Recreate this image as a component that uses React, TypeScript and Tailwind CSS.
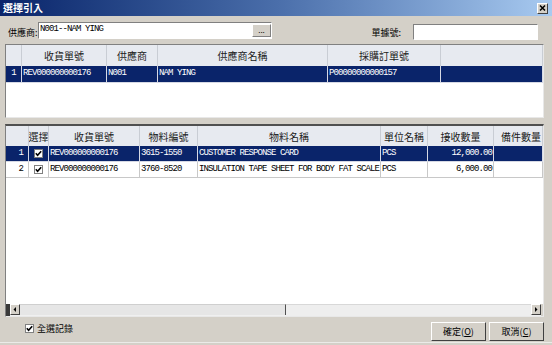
import type { ReactNode } from "react";

const CJK = "font-['Noto_Sans_CJK_TC','Noto_Sans_CJK_SC',sans-serif]";
const MONO = "font-['Liberation_Mono','Noto_Sans_CJK_TC',monospace] text-[9px] tracking-[-0.9px]";

type Col = { title: string; align?: "left" | "right" | "center" };

const UPPER_COLS = "grid-cols-[16px_85px_51px_170px_113px_1fr]";
const LOWER_COLS = "grid-cols-[23px_20px_91px_58px_183px_47px_66px_1fr]";

const upperHead: Col[] = [
  { title: "" },
  { title: "收貨單號" },
  { title: "供應商" },
  { title: "供應商名稱" },
  { title: "採購訂單號" },
  { title: "" },
];

const lowerHead: Col[] = [
  { title: "" },
  { title: "選擇" },
  { title: "收貨單號" },
  { title: "物料編號" },
  { title: "物料名稱" },
  { title: "單位名稱" },
  { title: "接收數量" },
  { title: "備件數量", align: "right" },
];

const items = [
  { no: 1, rev: "REV000000000176", code: "3615-1550", name: "CUSTOMER RESPONSE CARD", unit: "PCS", qty: "12,000.00", selected: true },
  { no: 2, rev: "REV000000000176", code: "3760-8520", name: "INSULATION TAPE SHEET FOR BODY FAT SCALE", unit: "PCS", qty: "6,000.00", selected: false },
];

function Check() {
  return (
    <span className="w-[9px] h-[9px] bg-white border border-[#808080] flex items-center justify-center">
      <svg width="7" height="7" viewBox="0 0 7 7">
        <path d="M0.8 3.2 L2.6 5.2 L6.2 1.2" stroke="#000" strokeWidth="1.6" fill="none" />
      </svg>
    </span>
  );
}

function HeadRow({ cols, gridCls, h }: { cols: Col[]; gridCls: string; h: string }) {
  return (
    <div className={`grid ${gridCls} ${h} bg-[#e7eaf0] shrink-0`}>
      {cols.map((c, i) => (
        <div
          key={i}
          className={`flex items-center border-r border-[#c9cdd4] text-[10px] text-[#1a1a1a] whitespace-nowrap overflow-hidden ${
            c.align === "right" ? "justify-end pr-[1px]" : "justify-center"
          }`}
        >
          {c.title}
        </div>
      ))}
    </div>
  );
}

function Cell({ children, right, sel, center }: { children?: ReactNode; right?: boolean; sel: boolean; center?: boolean }) {
  return (
    <div
      className={`flex items-center overflow-hidden whitespace-nowrap border-r border-b ${
        sel ? "border-[#d6d9e4] text-white" : "border-[#c8c8c8] text-black"
      } ${right ? "justify-end pr-[1px]" : center ? "justify-center" : "pl-[1px]"}`}
    >
      {children}
    </div>
  );
}

function ArrowBtn({ dir }: { dir: "left" | "right" }) {
  return (
    <div className="w-[10px] h-[11px] bg-[#d4d0c8] border border-t-white border-l-white border-r-[#404040] border-b-[#404040] flex items-center justify-center shrink-0">
      <svg width="4" height="5" viewBox="0 0 4 5">
        {dir === "left" ? <path d="M3 0 L0.5 2.5 L3 5 Z" fill="#000" /> : <path d="M1 0 L3.5 2.5 L1 5 Z" fill="#000" />}
      </svg>
    </div>
  );
}

export default function App() {
  return (
    <div className={`w-[552px] h-[345px] bg-[#d4d0c8] flex flex-col overflow-hidden ${CJK}`}>
      {/* title bar */}
      <div className="h-[16px] shrink-0 flex items-center justify-between bg-gradient-to-r from-[#0a246a] via-[#4a6eaa] to-[#a8caf0]">
        <span className="pl-[3px] text-white text-[10px] font-bold leading-none">選擇引入</span>
        <div className="mr-[4px] w-[11px] h-[11px] bg-[#d4d0c8] border border-t-white border-l-white border-r-[#404040] border-b-[#404040] flex items-center justify-center">
          <svg width="7" height="6" viewBox="0 0 7 6">
            <path d="M1 0.5 L6 5.5 M6 0.5 L1 5.5" stroke="#000" strokeWidth="1.5" />
          </svg>
        </div>
      </div>

      {/* search row */}
      <div className="h-[17px] mt-[6px] flex items-center shrink-0">
        <span className="pl-[8px] w-[38px] text-[9px] leading-none pt-[4px] whitespace-nowrap">供應商:</span>
        <div className="w-[234px] h-[17px] bg-white border border-t-[#808080] border-l-[#808080] border-r-white border-b-white flex items-start justify-between">
          <span className={`${MONO} leading-none pt-[2px] pl-[1px]`}>N001--NAM YING</span>
          <div className="w-[19px] h-[13px] mt-[1px] bg-[#d4d0c8] border border-t-white border-l-white border-r-[#808080] border-b-[#808080] flex items-end justify-center text-[8px] leading-none pb-[2px]">
            ...
          </div>
        </div>
        <span className="ml-auto text-[9px] leading-none pt-[3px] whitespace-nowrap">單據號:</span>
        <div className="ml-[12px] mr-[14px] w-[125px] h-[16px] mt-[2px] bg-white border border-t-[#808080] border-l-[#808080] border-r-white border-b-white" />
      </div>

      {/* upper grid */}
      <div className="mt-[5px] ml-[5px] w-[539px] h-[74px] shrink-0 bg-white border border-t-[#808080] border-l-[#808080] border-r-[#e8e8e8] border-b-[#e8e8e8] flex flex-col overflow-hidden">
        <HeadRow cols={upperHead} gridCls={UPPER_COLS} h="h-[21px]" />
        <div className={`grid ${UPPER_COLS} h-[17px] bg-[#0a246a] ${MONO}`}>
          <Cell sel center>
            1
          </Cell>
          <Cell sel>REV000000000176</Cell>
          <Cell sel>N001</Cell>
          <Cell sel>NAM YING</Cell>
          <Cell sel>P00000000000157</Cell>
          <Cell sel />
        </div>
      </div>

      {/* lower grid */}
      <div className="mt-[6px] ml-[5px] w-[539px] h-[193px] shrink-0 bg-white border-t-2 border-l border-t-[#505050] border-l-[#808080] border-r border-b border-r-[#e8e8e8] border-b-[#e8e8e8] flex flex-col overflow-hidden">
        <HeadRow cols={lowerHead} gridCls={LOWER_COLS} h="h-[20px]" />
        {items.map((r) => (
          <div key={r.no} className={`grid ${LOWER_COLS} h-[16px] ${r.selected ? "bg-[#0a246a]" : "bg-white"} ${MONO}`}>
            <Cell sel={r.selected} right>
              <span className="pr-[4px]">{r.no}</span>
            </Cell>
            <Cell sel={r.selected} center>
              <Check />
            </Cell>
            <Cell sel={r.selected}>{r.rev}</Cell>
            <Cell sel={r.selected}>{r.code}</Cell>
            <Cell sel={r.selected}>{r.name}</Cell>
            <Cell sel={r.selected}>{r.unit}</Cell>
            <Cell sel={r.selected} right>
              {r.qty}
            </Cell>
            <Cell sel={r.selected} />
          </div>
        ))}
        <div className="flex-1" />
        {/* horizontal scrollbar */}
        <div className="h-[12px] shrink-0 flex items-stretch bg-[#f0f0f0]">
          <div className="w-[4px] bg-[#3a3a3a]" />
          <ArrowBtn dir="left" />
          <div className="w-[266px] h-[11px] bg-[#e6e6e6] border-t border-t-[#cfcfcf] border-r border-r-[#505050]" />
          <div className="flex-1 bg-[#eeeeee] border-t border-t-[#d8d8d8]" />
          <ArrowBtn dir="right" />
          <div className="w-[2px] bg-[#d4d0c8]" />
        </div>
      </div>

      {/* footer */}
      <div className="flex-1 flex items-start pr-[8px]">
        <label className="mt-[7px] ml-[25px] flex items-center gap-[3px] text-[9px] leading-none">
          <Check />
          <span>全選記錄</span>
        </label>
        <div className="ml-auto mt-[5px] flex gap-[3px]">
          <button className="w-[55px] h-[19px] bg-[#d4d0c8] border border-t-white border-l-white border-r-[#404040] border-b-[#404040] text-[9px] leading-none">
            確定(<span className="underline">O</span>)
          </button>
          <button className="w-[55px] h-[19px] bg-[#d4d0c8] border border-t-white border-l-white border-r-[#404040] border-b-[#404040] text-[9px] leading-none">
            取消(<span className="underline">C</span>)
          </button>
        </div>
      </div>
      <div className="h-[3px] shrink-0 border-t border-t-[#ecebe8]" />
    </div>
  );
}
